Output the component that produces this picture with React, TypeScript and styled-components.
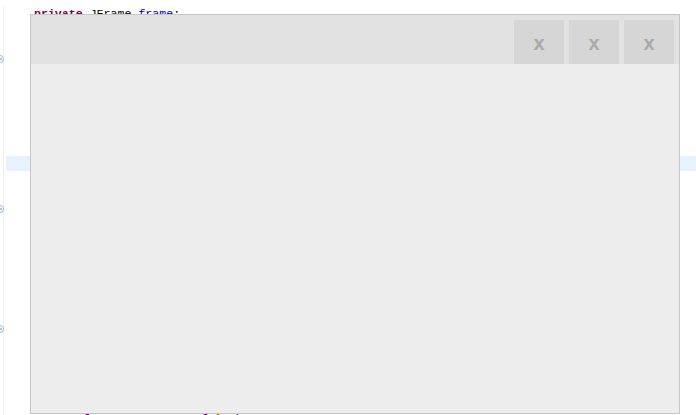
import React from "react";
import styled, { createGlobalStyle } from "styled-components";

const Global = createGlobalStyle`
  html, body { margin: 0; padding: 0; background: #ffffff; overflow: hidden; }
  #root { width: 696px; height: 415px; }
`;

const Editor = styled.div`
  position: relative;
  width: 696px;
  height: 415px;
  overflow: hidden;
  background: #ffffff;
  display: flex;
  flex-direction: column;
  padding-top: 6px;
  box-sizing: border-box;
`;

const Line = styled.div<{ $current?: boolean }>`
  display: flex;
  flex: 0 0 15px;
  height: 15px;
`;

const Gutter = styled.div`
  width: 3px;
  flex: 0 0 3px;
  border-right: 1px solid #efefef;
  display: flex;
  align-items: center;
  overflow: visible;
`;

const Code = styled.div<{ $current?: boolean }>`
  flex: 1;
  margin-left: 2px;
  padding-left: 28px;
  background: ${(p) => (p.$current ? "#e8f2fe" : "transparent")};
  font-family: "Liberation Mono", "DejaVu Sans Mono", monospace;
  font-size: 11.6px;
  line-height: 15px;
  white-space: pre;
  color: #000000;
`;

const Kw = styled.span`
  color: #7f0055;
  font-weight: bold;
`;

const Field = styled.span`
  color: #0000c0;
`;

const Str = styled.span`
  color: #c07000;
`;

const FoldIcon = styled.svg`
  width: 8px;
  height: 8px;
  margin-left: -4px;
  flex: 0 0 8px;
`;

const Dialog = styled.div`
  position: absolute;
  left: 30px;
  top: 14px;
  width: 650px;
  height: 400px;
  box-sizing: border-box;
  border: 1px solid #c6c6c6;
  background: #ededed;
  display: flex;
  flex-direction: column;
`;

const TitleBar = styled.div`
  height: 49px;
  flex: 0 0 49px;
  background: #e2e2e2;
  display: flex;
  justify-content: flex-end;
  align-items: flex-end;
  gap: 5px;
  padding-right: 5px;
`;

const WinButton = styled.div`
  width: 50px;
  height: 44px;
  background: #d6d6d6;
  color: #a9a9a9;
  font-family: "Liberation Sans", Arial, sans-serif;
  font-weight: bold;
  font-size: 20px;
  display: flex;
  align-items: center;
  justify-content: center;
  padding-top: 3px;
  box-sizing: border-box;
  user-select: none;
`;

const Body = styled.div`
  flex: 1;
  background: #ededed;
`;

const Fold = () => (
  <FoldIcon viewBox="0 0 8 8">
    <circle cx="4" cy="4" r="3.5" fill="#ffffff" stroke="#9fb5d6" strokeWidth="1" />
    <line x1="2" y1="4" x2="6" y2="4" stroke="#6f8fbf" strokeWidth="1" />
  </FoldIcon>
);

const foldLines = new Set([3, 13, 21]);

const renderCode = (i: number) => {
  if (i === 0)
    return (
      <>
        <Kw>private</Kw> JFrame <Field>frame</Field>;
      </>
    );
  if (i === 27)
    return (
      <>
        {"       "}<Kw>f</Kw>{" "}<Str>r</Str>{"              "}<Kw>f</Kw>{" "}<Str>l</Str><Str>a</Str>{" "}<Field>b</Field>{" "}<Str>t</Str>
      </>
    );
  return null;
};

export default function App() {
  const lines = Array.from({ length: 28 }, (_, i) => i);
  return (
    <>
      <Global />
      <Editor>
        {lines.map((i) => (
          <Line key={i}>
            <Gutter>{foldLines.has(i) ? <Fold /> : null}</Gutter>
            <Code $current={i === 10}>{renderCode(i)}</Code>
          </Line>
        ))}
        <Dialog>
          <TitleBar>
            <WinButton>x</WinButton>
            <WinButton>x</WinButton>
            <WinButton>x</WinButton>
          </TitleBar>
          <Body />
        </Dialog>
      </Editor>
    </>
  );
}
